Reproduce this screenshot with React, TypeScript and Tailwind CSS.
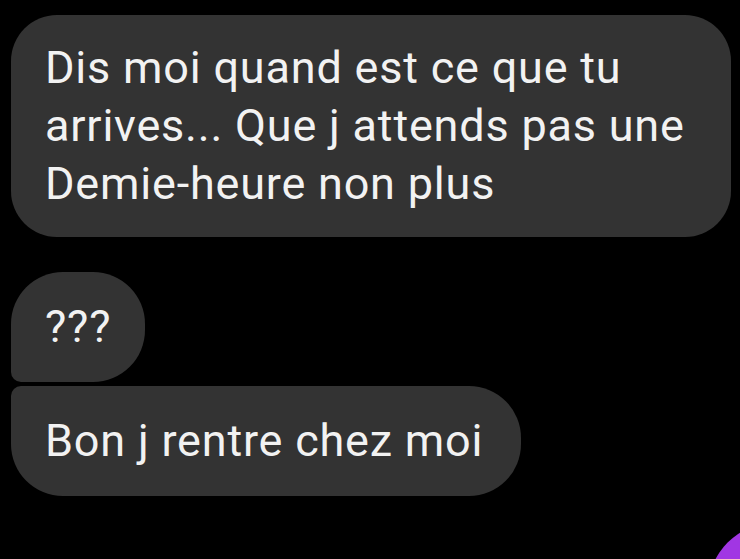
import React from "react";

const messages = [
  {
    lines: ["Dis moi quand est ce que tu", "arrives... Que j attends pas une", "Demie-heure non plus"],
    box: "w-[720px] h-[222px] rounded-[46px]",
  },
  { lines: ["???"], box: "w-[134px] h-[110px] rounded-[52px] rounded-bl-[10px] mt-[35px]" },
  { lines: ["Bon j rentre chez moi"], box: "w-[510px] h-[110px] rounded-[52px] rounded-tl-[10px] mt-[4px]" },
];

export default function App() {
  return (
    <div
      className="relative w-[740px] h-[559px] overflow-hidden bg-black pt-[15px] pl-[11px] flex flex-col items-start"
      style={{ fontFamily: "Roboto, 'Noto Sans', sans-serif" }}
    >
      {messages.map((m, i) => (
        <div key={i} className={`flex flex-col justify-center bg-[#333333] pl-[34px] ${m.box}`}>
          {m.lines.map((l, j) => (
            <p key={j} className="text-[45px] leading-[58px] text-[#f2f2f2] tracking-[0.8px] whitespace-nowrap">
              {l}
            </p>
          ))}
        </div>
      ))}

      {/* purple send button peeking in */}
      <div className="absolute left-[708px] top-[523px] w-[134px] h-[134px] rounded-full bg-[#a136e3]" />
    </div>
  );
}
